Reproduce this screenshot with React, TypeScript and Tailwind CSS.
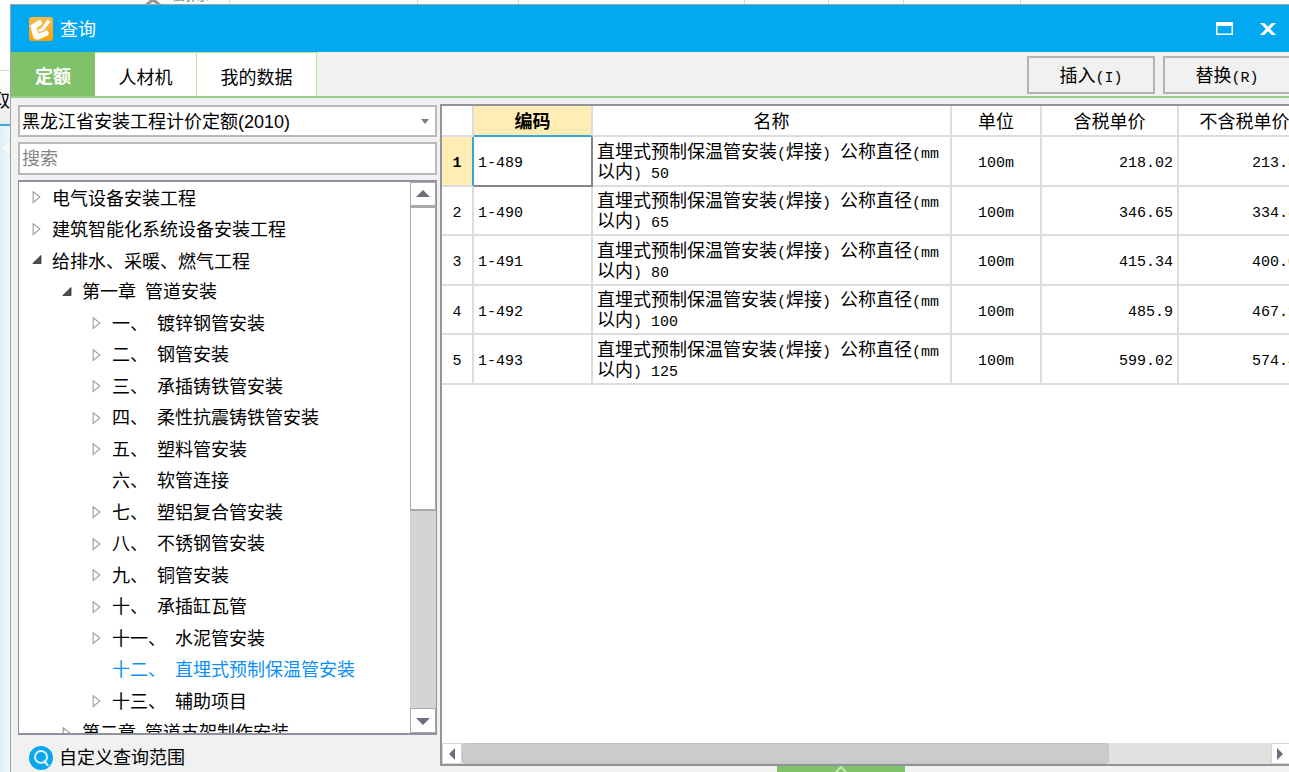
import React from "react";

/* Latin runs are set in a half-width face, CJK runs in the full-width one. */
function Mixed({ text }: { text: string }) {
  const parts = text.split(/([\x20-\x7e]+)/).filter(Boolean);
  return (
    <>
      {parts.map((part, i) =>
        /^[\x20-\x7e]/.test(part) ? (
          <span key={i} className="text-[15px]">
            {part}
          </span>
        ) : (
          <React.Fragment key={i}>{part}</React.Fragment>
        ),
      )}
    </>
  );
}

type NodeState = "closed" | "open" | "leaf";
type TreeNode = { label: string; level: 0 | 1 | 2; state: NodeState; selected?: boolean };

const tree: TreeNode[] = [
  { label: "电气设备安装工程", level: 0, state: "closed" },
  { label: "建筑智能化系统设备安装工程", level: 0, state: "closed" },
  { label: "给排水、采暖、燃气工程", level: 0, state: "open" },
  { label: "第一章 管道安装", level: 1, state: "open" },
  { label: "一、 镀锌钢管安装", level: 2, state: "closed" },
  { label: "二、 钢管安装", level: 2, state: "closed" },
  { label: "三、 承插铸铁管安装", level: 2, state: "closed" },
  { label: "四、 柔性抗震铸铁管安装", level: 2, state: "closed" },
  { label: "五、 塑料管安装", level: 2, state: "closed" },
  { label: "六、 软管连接", level: 2, state: "leaf" },
  { label: "七、 塑铝复合管安装", level: 2, state: "closed" },
  { label: "八、 不锈钢管安装", level: 2, state: "closed" },
  { label: "九、 铜管安装", level: 2, state: "closed" },
  { label: "十、 承插缸瓦管", level: 2, state: "closed" },
  { label: "十一、 水泥管安装", level: 2, state: "closed" },
  { label: "十二、 直埋式预制保温管安装", level: 2, state: "leaf", selected: true },
  { label: "十三、 辅助项目", level: 2, state: "closed" },
  { label: "第二章 管道支架制作安装", level: 1, state: "closed" },
];

const indent = { 0: "pl-[13px]", 1: "pl-[43px]", 2: "pl-[73px]" };

const rows = [
  { code: "1-489", size: "50", taxed: "218.02", net: "213.86" },
  { code: "1-490", size: "65", taxed: "346.65", net: "334.86" },
  { code: "1-491", size: "80", taxed: "415.34", net: "400.06" },
  { code: "1-492", size: "100", taxed: "485.9", net: "467.16" },
  { code: "1-493", size: "125", taxed: "599.02", net: "574.46" },
];

function Marker({ state }: { state: NodeState }) {
  return (
    <svg viewBox="0 0 10 14" className="h-[14px] w-[10px] shrink-0" aria-hidden="true">
      {state === "closed" && (
        <path d="M1.2 0.8 L7.8 6 L1.2 11.4 Z" fill="#fff" stroke="#a3a3a3" strokeWidth="1.2" />
      )}
      {state === "open" && <path d="M9 1.5 V9.5 H0.8 Z" fill="#505050" stroke="#303030" strokeWidth="0.8" />}
    </svg>
  );
}

function Arrow({ dir }: { dir: "up" | "down" | "left" | "right" }) {
  const d = {
    up: "M0 10 L7 3 L14 10 Z",
    down: "M0 4 L14 4 L7 11 Z",
    left: "M10 1 V13 L4 7 Z",
    right: "M4 1 V13 L10 7 Z",
  }[dir];
  return (
    <svg viewBox="0 0 14 14" className="h-[14px] w-[14px]" aria-hidden="true">
      <path d={d} fill="#6b6e7c" />
    </svg>
  );
}

function BackgroundTop() {
  return (
    <div className="flex h-1 shrink-0 overflow-hidden bg-white">
      <div className="flex w-[230px] shrink-0 justify-end gap-3 border-r border-[#d6d6d6] pr-5">
        <svg viewBox="0 0 16 4" className="h-1 w-4" aria-hidden="true">
          <path d="M0 4 L5 0 H11 L16 4 H11 L8 2 L5 4 Z" fill="#999" />
        </svg>
        <span className="-mt-[15px] text-[18px] leading-5 text-[#8a8f98]">删除</span>
      </div>
      <div className="w-[188px] border-r border-[#d6d6d6]" />
      <div className="w-[101px] border-r border-[#d6d6d6]" />
      <div className="w-[226px] border-r border-[#d6d6d6]" />
      <div className="w-[84px] border-r border-[#d6d6d6]" />
      <div className="w-[75px] border-r border-[#d6d6d6]" />
      <div className="w-[117px] border-r border-[#d6d6d6]" />
    </div>
  );
}

function BackgroundLeft() {
  return (
    <div className="flex w-[10px] shrink-0 flex-col overflow-hidden">
      <div className="h-[67px] shrink-0 border-b border-[#d6d6d6] bg-white" />
      <div className="flex h-[55px] shrink-0 items-center justify-end border-b-2 border-[#3aa9dc] bg-linear-to-b from-white to-[#ececec] pt-2 text-[18px] text-black">
        取
      </div>
      <div className="flex-1 bg-linear-to-r from-[#ddf1f8] to-[#eefafd] pt-[12px]">
        <svg viewBox="0 0 10 20" className="h-5 w-[10px]" aria-hidden="true">
          <path d="M10 0 L1 10 L10 20 Z" fill="#f7f7f7" stroke="#d8dfe2" strokeWidth="0.8" />
        </svg>
      </div>
    </div>
  );
}

function TitleBar() {
  return (
    <header className="flex h-[47px] shrink-0 items-center bg-[#02a9f1] pl-[18px] pr-[13px] text-white">
      <svg viewBox="0 0 24 24" className="h-6 w-6" aria-hidden="true">
        <defs>
          <linearGradient id="logo" x1="0" y1="0" x2="0" y2="1">
            <stop offset="0" stopColor="#fdba45" />
            <stop offset="1" stopColor="#f8a007" />
          </linearGradient>
        </defs>
        <rect width="24" height="24" rx="3" fill="url(#logo)" />
        <path
          d="M1.5 8.5 L11 3 L13 5 L12.5 7.5 L7.5 10.5 L9 16.5 L15 15 L17.5 13 L19.5 16 L19 18 L9 22.5 L5 21.5 Z"
          fill="#fff"
          stroke="#fff"
          strokeWidth="0.6"
          strokeLinejoin="round"
        />
        <path d="M8 12.5 L11.5 11.5 L18.5 2.2 L22 4.8 L14.5 14.2 L10.5 15.2 Z" fill="#fff" stroke="#fbb040" strokeWidth="0.8" />
      </svg>
      <h1 className="ml-[7px] flex-1 pt-1 text-[18px] leading-6">查询</h1>
      <button type="button" aria-label="最大化" className="flex h-8 w-8 items-center justify-center">
        <svg viewBox="0 0 17 13" className="h-[13px] w-[17px]" aria-hidden="true">
          <path d="M0 0 H17 V13 H0 Z M1.5 4 V11.5 H15.5 V4 Z" fill="#fff" fillRule="evenodd" />
        </svg>
      </button>
      <button type="button" aria-label="关闭" className="ml-4 flex h-8 w-6 items-center justify-center">
        <svg viewBox="0 0 16 12" className="h-3 w-4 shrink-0" aria-hidden="true">
          <path d="M0 0 H4.2 L8 3.8 L11.8 0 H16 L10.2 6 L16 12 H11.8 L8 8.2 L4.2 12 H0 L5.8 6 Z" fill="#fff" />
        </svg>
      </button>
    </header>
  );
}

function Toolbar() {
  const button = "h-[38px] w-[128px] border-2 border-[#b4b4b4] bg-[#f1f1f1] pt-[6px]";
  return (
    <div className="flex h-[46px] shrink-0 border-b-2 border-[#98cf88]">
      <nav className="flex flex-1">
        <button type="button" className="w-[84px] bg-[#80c269] pt-2 font-bold text-white">
          定额
        </button>
        <button type="button" className="w-[102px] border-r border-t border-[#b5e6a2] bg-white pt-2">
          人材机
        </button>
        <button type="button" className="w-[120px] border-r border-t border-[#b5e6a2] bg-white pt-2">
          我的数据
        </button>
      </nav>
      <div className="flex gap-2 pr-[2px] pt-1">
        <button type="button" className={button}>
          <Mixed text="插入(I)" />
        </button>
        <button type="button" className={button}>
          <Mixed text="替换(R)" />
        </button>
      </div>
    </div>
  );
}

function Sidebar() {
  return (
    <aside className="flex w-[426px] shrink-0 flex-col pl-[7px] pt-[7px]">
      <div className="grid h-8 shrink-0 items-center">
        <select
          aria-label="定额库"
          className="col-start-1 row-start-1 h-8 w-full appearance-none border-2 border-[#b9b9b9] bg-white pl-[2px] pt-[2px] font-['Liberation_Sans','Noto_Sans_CJK_SC',sans-serif] text-[18px] text-black"
        >
          <option>黑龙江省安装工程计价定额(2010)</option>
        </select>
        <svg viewBox="0 0 8 5" className="pointer-events-none col-start-1 row-start-1 mr-2 h-[5px] w-2 justify-self-end" aria-hidden="true">
          <path d="M0 0 H8 L4 5 Z" fill="#7a7c88" />
        </svg>
      </div>
      <input
        type="search"
        aria-label="搜索"
        placeholder="搜索"
        className="mt-[5px] h-[33px] w-full shrink-0 border-2 border-[#b9b9b9] bg-white px-[2px] pt-[2px] text-[18px] placeholder:text-[#858585]"
      />
      <div className="mt-[5px] flex min-h-0 flex-1 border-x border-y-2 border-[#8f929c] bg-white">
        <ul className="min-w-0 flex-1 overflow-hidden">
          {tree.map((node) => (
            <li key={node.label} className="odd:h-8 even:h-[31px]">
              <button
                type="button"
                className={`flex h-full w-full items-center gap-[10px] whitespace-pre text-left ${indent[node.level]} ${
                  node.selected ? "text-[#0d8ff5]" : "text-black"
                }`}
              >
                <Marker state={node.state} />
                <span className="pt-[3px]">
                  <Mixed text={node.label} />
                </span>
              </button>
            </li>
          ))}
        </ul>
        <div className="flex w-[26px] flex-col bg-[#d4d4d4]">
          <button type="button" aria-label="向上滚动" className="flex h-[25px] items-center justify-center border border-b-2 border-[#a9a9a9] bg-white">
            <Arrow dir="up" />
          </button>
          <div className="h-[304px] border border-b-2 border-[#a9a9a9] bg-white" />
          <div className="flex-1" />
          <button type="button" aria-label="向下滚动" className="flex h-[25px] items-center justify-center border border-[#a9a9a9] bg-white">
            <Arrow dir="down" />
          </button>
        </div>
      </div>
      <button type="button" className="flex h-[37px] shrink-0 items-center gap-[6px] pl-[11px] pt-[8px] text-left">
        <svg viewBox="0 0 24 24" className="h-6 w-6" aria-hidden="true">
          <circle cx="12" cy="12" r="12" fill="#0ba7ee" />
          <circle cx="12" cy="11" r="6" fill="none" stroke="#d9f2fd" strokeWidth="2" />
          <path d="M15.5 15.5 L18.5 19" stroke="#d9f2fd" strokeWidth="2.4" strokeLinecap="round" />
        </svg>
        <span className="pt-[3px]">自定义查询范围</span>
      </button>
    </aside>
  );
}

function Results() {
  const head = "border-b-2 border-r-2 border-[#dcdcdc] px-0 pb-0 pt-[5px] font-normal";
  const cell = "border-b-2 border-r-2 border-[#dcdcdc] px-1 pb-0 pt-[5px]";
  return (
    <section className="flex min-w-0 flex-1 flex-col pl-[3px] pt-[6px]">
      <div className="flex min-h-0 flex-1 flex-col border-2 border-r-0 border-[#90959c] bg-white">
        <div className="min-h-0 flex-1 overflow-hidden">
          <table className="w-[870px] table-fixed border-separate border-spacing-0">
            <colgroup>
              <col className="w-8" />
              <col className="w-[119px]" />
              <col className="w-[359px]" />
              <col className="w-[90px]" />
              <col className="w-[137px]" />
              <col className="w-[133px]" />
            </colgroup>
            <thead className="leading-6">
              <tr className="h-[31px]">
                <th className={head} aria-label="序号" />
                <th className="border-b-2 border-r-2 border-b-[#38a6d3] border-r-[#dcdcdc] bg-[#ffedb5] px-0 pb-0 pt-[5px] font-bold">编码</th>
                <th className={head}>名称</th>
                <th className={head}>单位</th>
                <th className={head}>含税单价</th>
                <th className={head}>不含税单价</th>
              </tr>
            </thead>
            <tbody className="leading-[19px]">
              {rows.map((row, i) => (
                <tr key={row.code} className="odd:h-[50px] even:h-[49px]">
                  <th
                    scope="row"
                    className={
                      i === 0
                        ? "border-b-2 border-r-2 border-b-[#dcdcdc] border-r-[#38a6d3] bg-[#ffedb5] px-0 pb-0 pt-[5px] text-[15px] font-bold"
                        : "border-b-2 border-r-2 border-[#dcdcdc] px-0 pb-0 pt-[5px] text-[15px] font-normal"
                    }
                  >
                    {i + 1}
                  </th>
                  <td
                    className={
                      i === 0
                        ? "border-b-2 border-r-2 border-[#858585] px-1 pb-0 pt-[5px] text-[15px]"
                        : `${cell} text-[15px]`
                    }
                  >
                    {row.code}
                  </td>
                  <td className={cell}>
                    <Mixed text={`直埋式预制保温管安装(焊接) 公称直径(mm以内) ${row.size}`} />
                  </td>
                  <td className={`${cell} text-center text-[15px]`}>100m</td>
                  <td className={`${cell} text-right text-[15px]`}>{row.taxed}</td>
                  <td className={`${cell} text-right text-[15px]`}>{row.net}</td>
                </tr>
              ))}
            </tbody>
          </table>
        </div>
        <div className="flex h-[21px] shrink-0 bg-[#e1e1e1]">
          <button type="button" aria-label="向左滚动" className="flex w-5 items-center justify-center border border-[#d4d4d4] bg-white">
            <Arrow dir="left" />
          </button>
          <div className="w-[76%] rounded-sm border border-[#c3c3c3] bg-[#cbcbcb]" />
          <div className="flex-1" />
          <button type="button" aria-label="向右滚动" className="flex w-[22px] items-center justify-center border border-[#d4d4d4] bg-white pr-1">
            <Arrow dir="right" />
          </button>
        </div>
      </div>
      <div className="flex h-[6px] shrink-0">
        <button type="button" aria-label="展开" className="ml-[337px] flex w-[128px] justify-center bg-[#80c269]">
          <svg viewBox="0 0 12 6" className="h-[6px] w-3" aria-hidden="true">
            <path d="M1 6 L6 1 L11 6" fill="none" stroke="#c4e5b8" strokeWidth="2" />
          </svg>
        </button>
      </div>
    </section>
  );
}

export default function App() {
  return (
    <div className="flex h-screen flex-col overflow-hidden font-['Liberation_Mono','Noto_Sans_CJK_SC',monospace] text-[18px] leading-6 text-black">
      <BackgroundTop />
      <div className="flex min-h-0 flex-1">
        <BackgroundLeft />
        <main className="-mr-1 flex min-w-0 flex-1 flex-col border-l border-t border-[#a3a3a3] bg-[#f1f1f1]">
          <TitleBar />
          <Toolbar />
          <div className="flex min-h-0 flex-1">
            <Sidebar />
            <Results />
          </div>
        </main>
      </div>
    </div>
  );
}
